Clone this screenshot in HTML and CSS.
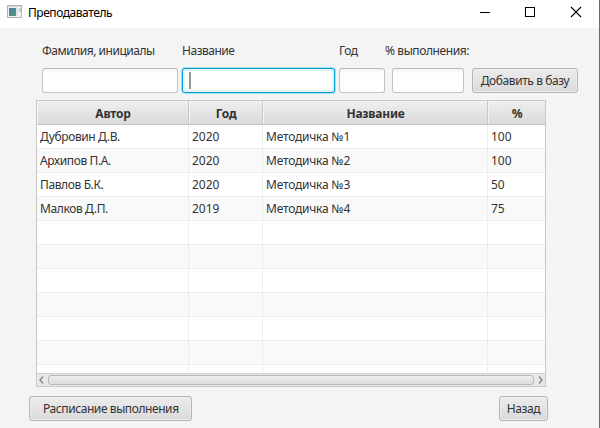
FILE: index.html
```html
<!DOCTYPE html>
<html lang="ru">
<head>
<meta charset="utf-8">
<title>Преподаватель</title>
<link rel="stylesheet" href="styles.css">
</head>
<body>
<div class="window">
  <header class="titlebar">
    <svg class="app-icon" width="16" height="14" viewBox="0 0 16 14">
      <defs><linearGradient id="g" x1="0" y1="0" x2="1" y2="1"><stop offset="0" stop-color="#4777ad"/><stop offset="1" stop-color="#4fa072"/></linearGradient></defs>
      <rect x=".5" y=".5" width="14" height="12" fill="#f3f3f3" stroke="#b0b3b8"/>
      <rect x="1" y="1" width="13" height="1" fill="#d5d8dc"/>
      <rect x="2" y="3" width="7" height="8" fill="url(#g)"/>
      <rect x="9" y="3" width="2" height="8" fill="#dce2e4"/>
      <rect x="12" y="3" width="2" height="4" fill="#b9d6c8"/>
    </svg>
    <h1 class="title">Преподаватель</h1>
    <svg class="controls" width="102" height="12" viewBox="0 0 102 12" fill="none" stroke="#000">
      <path d="M0 6.5H10"/>
      <rect x="45.5" y="1.5" width="9" height="9"/>
      <path d="M91 1L101 11M101 1L91 11" stroke-width="1.1"/>
    </svg>
  </header>
  <main class="content">
    <form class="form">
      <label class="label w-author">Фамилия, инициалы</label>
      <label class="label w-name">Название</label>
      <label class="label w-year">Год</label>
      <label class="label w-percent">% выполнения:</label>
      <div class="field author"></div>
      <div class="field name focused"><span class="caret"></span></div>
      <div class="field year"></div>
      <div class="field percent"></div>
      <button class="button add" type="button">Добавить в базу</button>
    </form>
    <section class="table">
      <div class="row head"><span>Автор</span><span>Год</span><span>Название</span><span>%</span></div>
      <div class="rows">
        <div class="row"><span>Дубровин Д.В.</span><span>2020</span><span>Методичка №1</span><span>100</span></div>
        <div class="row"><span>Архипов П.А.</span><span>2020</span><span>Методичка №2</span><span>100</span></div>
        <div class="row"><span>Павлов Б.К.</span><span>2020</span><span>Методичка №3</span><span>50</span></div>
        <div class="row"><span>Малков Д.П.</span><span>2019</span><span>Методичка №4</span><span>75</span></div>
        <div class="row"><span></span><span></span><span></span><span></span></div>
        <div class="row"><span></span><span></span><span></span><span></span></div>
        <div class="row"><span></span><span></span><span></span><span></span></div>
        <div class="row"><span></span><span></span><span></span><span></span></div>
        <div class="row"><span></span><span></span><span></span><span></span></div>
        <div class="row"><span></span><span></span><span></span><span></span></div>
        <div class="row"><span></span><span></span><span></span><span></span></div>
      </div>
      <div class="scrollbar">
        <svg width="5" height="8" viewBox="0 0 5 8"><path d="M4 .5L1 4L4 7.5" fill="none" stroke="#888" stroke-width="1.4"/></svg>
        <div class="thumb"></div>
        <svg width="5" height="8" viewBox="0 0 5 8"><path d="M1 .5L4 4L1 7.5" fill="none" stroke="#888" stroke-width="1.4"/></svg>
      </div>
    </section>
    <footer class="footer">
      <button class="button schedule" type="button">Расписание выполнения</button>
      <button class="button back" type="button">Назад</button>
    </footer>
  </main>
</div>
</body>
</html>
```

FILE: styles.css
```css
* { box-sizing: border-box; }

body {
  margin: 0;
  font: 12px/16px "Noto Sans", "Open Sans", sans-serif;
  color: #333;
}

.window {
  width: 600px;
  height: 428px;
  background: #f4f4f4;
  border-right: 1px solid #6b6b6b;
  overflow: hidden;
}

.titlebar {
  display: flex;
  height: 28px;
  padding: 0 17px 4px 7px;
  align-items: center;
  background: #fff;
}

.title {
  margin: 0 auto 0 5px;
  padding-top: 2px;
  font-size: 12px;
  font-weight: 400;
  letter-spacing: -0.45px;
  color: #000;
}

.form {
  display: grid;
  grid-template-columns: 136px 153px 46px 72px 106px;
  grid-template-rows: 16px 25px;
  column-gap: 4px;
  row-gap: 9px;
  padding: 15px 0 0 42px;
}

.label { white-space: nowrap; letter-spacing: -0.48px; }
.w-percent { grid-column: 4 / 6; margin-left: -4px; letter-spacing: -0.4px; }
.percent { margin-left: 3px; margin-right: -3px; }
.add { margin-left: 7px; margin-right: -7px; }

.field {
  border: 1px solid #c3c3c3;
  border-top-color: #b8b8b8;
  border-radius: 3px;
  background: linear-gradient(#f2f2f2, #fff 4px);
}

.focused {
  padding: 3px 0 0 6px;
  border-color: #039ed3;
  background: #fff;
  box-shadow: 0 0 0 1px #a9dff1, inset 0 0 0 2px #e2f4fa;
}

.caret {
  display: block;
  width: 2px;
  height: 17px;
  background: #969696;
}

.button {
  height: 25px;
  padding: 0;
  border: 1px solid #b5b5b5;
  border-radius: 3px;
  background: linear-gradient(#ececec, #dadada);
  box-shadow: inset 0 0 0 1px #f0f0f0aa;
  font: inherit;
  letter-spacing: -0.42px;
  color: #333;
  white-space: nowrap;
}

.table {
  width: 510px;
  height: 287px;
  margin: 7px 0 0 36px;
  border: 1px solid #c8c8c8;
  background: #fff;
}

.row {
  display: grid;
  grid-template-columns: 152px 74px 225px 57px;
  height: 24px;
}

.row span {
  padding: 4px 3px 3px;
  border-right: 1px solid #ededed;
  border-bottom: 1px solid #ededed;
  white-space: nowrap;
}

.row span:last-child { border-right: 0; }
.rows .row span:first-child { letter-spacing: -0.38px; }
.rows .row span:nth-child(3) { letter-spacing: -0.22px; }
.rows .row:nth-child(even) { background: #f9f9f9; }

.head { font-weight: 700; text-align: center; }

.row.head span {
  padding-top: 5px;
  padding-bottom: 2px;
  padding-left: 4px;
  border-color: #c8c8c8;
  background: linear-gradient(#efefef, #dadada);
  box-shadow: inset 1px 1px #f4f4f4;
  letter-spacing: -0.2px;
}

.rows { height: 248px; overflow: hidden; }

.scrollbar {
  display: flex;
  height: 13px;
  padding: 0 2px;
  align-items: center;
  gap: 4px;
  border-top: 1px solid #d0d0d0;
  background: #e8e8e8;
}

.thumb {
  flex: 1;
  height: 10px;
  border: 1px solid #b8b8b8;
  border-radius: 3px;
  background: linear-gradient(#eee, #dcdcdc);
}

.footer {
  display: flex;
  justify-content: space-between;
  padding: 9px 51px 0 29px;
}

.schedule { width: 163px; padding-left: 13px; text-align: left; }
.back { width: 49px; }
```
